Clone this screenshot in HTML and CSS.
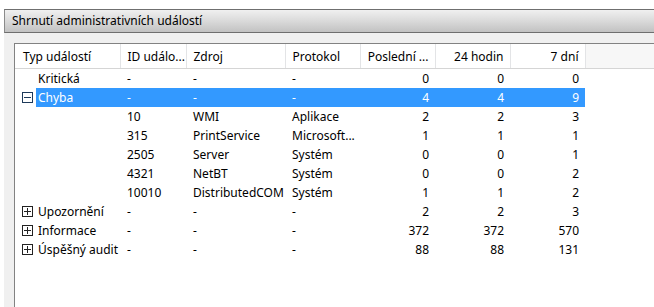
FILE: index.html
```html
<!DOCTYPE html>
<html>
<head>
<meta charset="utf-8">
<link rel="stylesheet" href="styles.css">
</head>
<body>
<div class="panel">
  <div class="titlebar">Shrnutí administrativních událostí</div>
  <div class="content">
    <div class="list">
      <table class="grid">
        <colgroup>
          <col class="c1"><col class="c2"><col class="c3"><col class="c4"><col class="c5"><col class="c6"><col class="c7"><col class="cf">
        </colgroup>
        <thead>
          <tr>
            <th class="first">Typ událostí</th>
            <th>ID událo...</th>
            <th>Zdroj</th>
            <th>Protokol</th>
            <th class="num">Poslední ...</th>
            <th class="num">24 hodin</th>
            <th class="num">7 dní</th>
            <th class="filler"></th>
          </tr>
        </thead>
        <tbody>
          <tr>
            <td class="first"><span class="tree"><span class="exp none"></span><span class="name">Kritická</span></span></td>
            <td>-</td><td>-</td><td>-</td><td class="num">0</td><td class="num">0</td><td class="num">0</td><td></td>
          </tr>
          <tr class="sel">
            <td class="first"><span class="tree"><span class="exp minus"></span><span class="name hl">Chyba</span></span></td>
            <td class="hl">-</td><td class="hl">-</td><td class="hl">-</td><td class="num hl">4</td><td class="num hl">4</td><td class="num hl">9</td><td></td>
          </tr>
          <tr><td></td><td>10</td><td>WMI</td><td>Aplikace</td><td class="num">2</td><td class="num">2</td><td class="num">3</td><td></td></tr>
          <tr><td></td><td>315</td><td>PrintService</td><td>Microsoft...</td><td class="num">1</td><td class="num">1</td><td class="num">1</td><td></td></tr>
          <tr><td></td><td>2505</td><td>Server</td><td>Systém</td><td class="num">0</td><td class="num">0</td><td class="num">1</td><td></td></tr>
          <tr><td></td><td>4321</td><td>NetBT</td><td>Systém</td><td class="num">0</td><td class="num">0</td><td class="num">2</td><td></td></tr>
          <tr><td></td><td>10010</td><td>DistributedCOM</td><td>Systém</td><td class="num">1</td><td class="num">1</td><td class="num">2</td><td></td></tr>
          <tr>
            <td class="first"><span class="tree"><span class="exp plus"></span><span class="name">Upozornění</span></span></td>
            <td>-</td><td>-</td><td>-</td><td class="num">2</td><td class="num">2</td><td class="num">3</td><td></td>
          </tr>
          <tr>
            <td class="first"><span class="tree"><span class="exp plus"></span><span class="name">Informace</span></span></td>
            <td>-</td><td>-</td><td>-</td><td class="num">372</td><td class="num">372</td><td class="num">570</td><td></td>
          </tr>
          <tr>
            <td class="first"><span class="tree"><span class="exp plus"></span><span class="name">Úspěšný audit</span></span></td>
            <td>-</td><td>-</td><td>-</td><td class="num">88</td><td class="num">88</td><td class="num">131</td><td></td>
          </tr>
        </tbody>
      </table>
    </div>
  </div>
</div>
</body>
</html>
```

FILE: styles.css
```css
html, body {
  margin: 0;
  padding: 0;
  background: #ffffff;
}
body {
  font-family: "Noto Sans", "DejaVu Sans", sans-serif;
  font-size: 12px;
  color: #000;
  overflow: hidden;
}
.panel {
  margin: 9px 0 0 4px;
  display: flex;
  flex-direction: column;
  height: 298px;
}
.titlebar {
  height: 22px;
  line-height: 22px;
  padding-left: 7px;
  border-top: 1px solid #6f6f6f;
  border-bottom: 1px solid #6f6f6f;
  border-left: 1px solid #8a8a8a;
  background: linear-gradient(to bottom, #f0f0f0 0%, #dcdcdc 45%, #c2c2c2 100%);
  white-space: nowrap;
}
.content {
  flex: 1;
  background: #f0f0f0;
  padding: 10px 0 0 10px;
  display: flex;
}
.list {
  flex: 1;
  background: #fff;
  border-top: 1px solid #828282;
  border-left: 1px solid #828282;
  overflow: hidden;
}
.grid {
  border-collapse: collapse;
  table-layout: fixed;
  width: 700px;
}
.c1 { width: 105px; }
.c2 { width: 66px; }
.c3 { width: 99px; }
.c4 { width: 75px; }
.c5 { width: 75px; }
.c6 { width: 75px; }
.c7 { width: 75px; }
.cf { width: auto; }
th {
  height: 24px;
  padding: 0 6px 0 7px;
  font-weight: normal;
  text-align: left;
  white-space: nowrap;
  overflow: hidden;
  background: #fff;
  border-right: 1px solid #e3e4e6;
  border-bottom: 1px solid #d5d5d5;
}
th.first { padding-left: 8px; }
th.num { text-align: right; padding-right: 6px; }
th.filler { background: #f7f7f7; border-right: none; }
td {
  height: 19px;
  padding: 0 6px 0 7px;
  white-space: nowrap;
  overflow: hidden;
}
td.num { text-align: right; padding-right: 6px; }
td.first { padding: 0 0 0 7px; }
.tree {
  display: flex;
  align-items: center;
  height: 19px;
}
.exp {
  width: 11px;
  height: 11px;
  margin-right: 3px;
  flex: none;
  box-sizing: border-box;
  position: relative;
}
.exp.minus, .exp.plus {
  border: 1px solid #1e3a5a;
}
.exp.plus { border-color: #222; }
.exp.minus::before, .exp.plus::before {
  content: "";
  position: absolute;
  left: 1px;
  right: 1px;
  top: 4px;
  height: 1px;
  background: #1e3a5a;
}
.exp.plus::before { background: #222; }
.exp.plus::after {
  content: "";
  position: absolute;
  top: 1px;
  bottom: 1px;
  left: 4px;
  width: 1px;
  background: #222;
}
.name {
  flex: 1;
  height: 19px;
  line-height: 19px;
  padding-left: 2px;
}
.hl {
  background: #3399ff;
  color: #fff;
}
```
